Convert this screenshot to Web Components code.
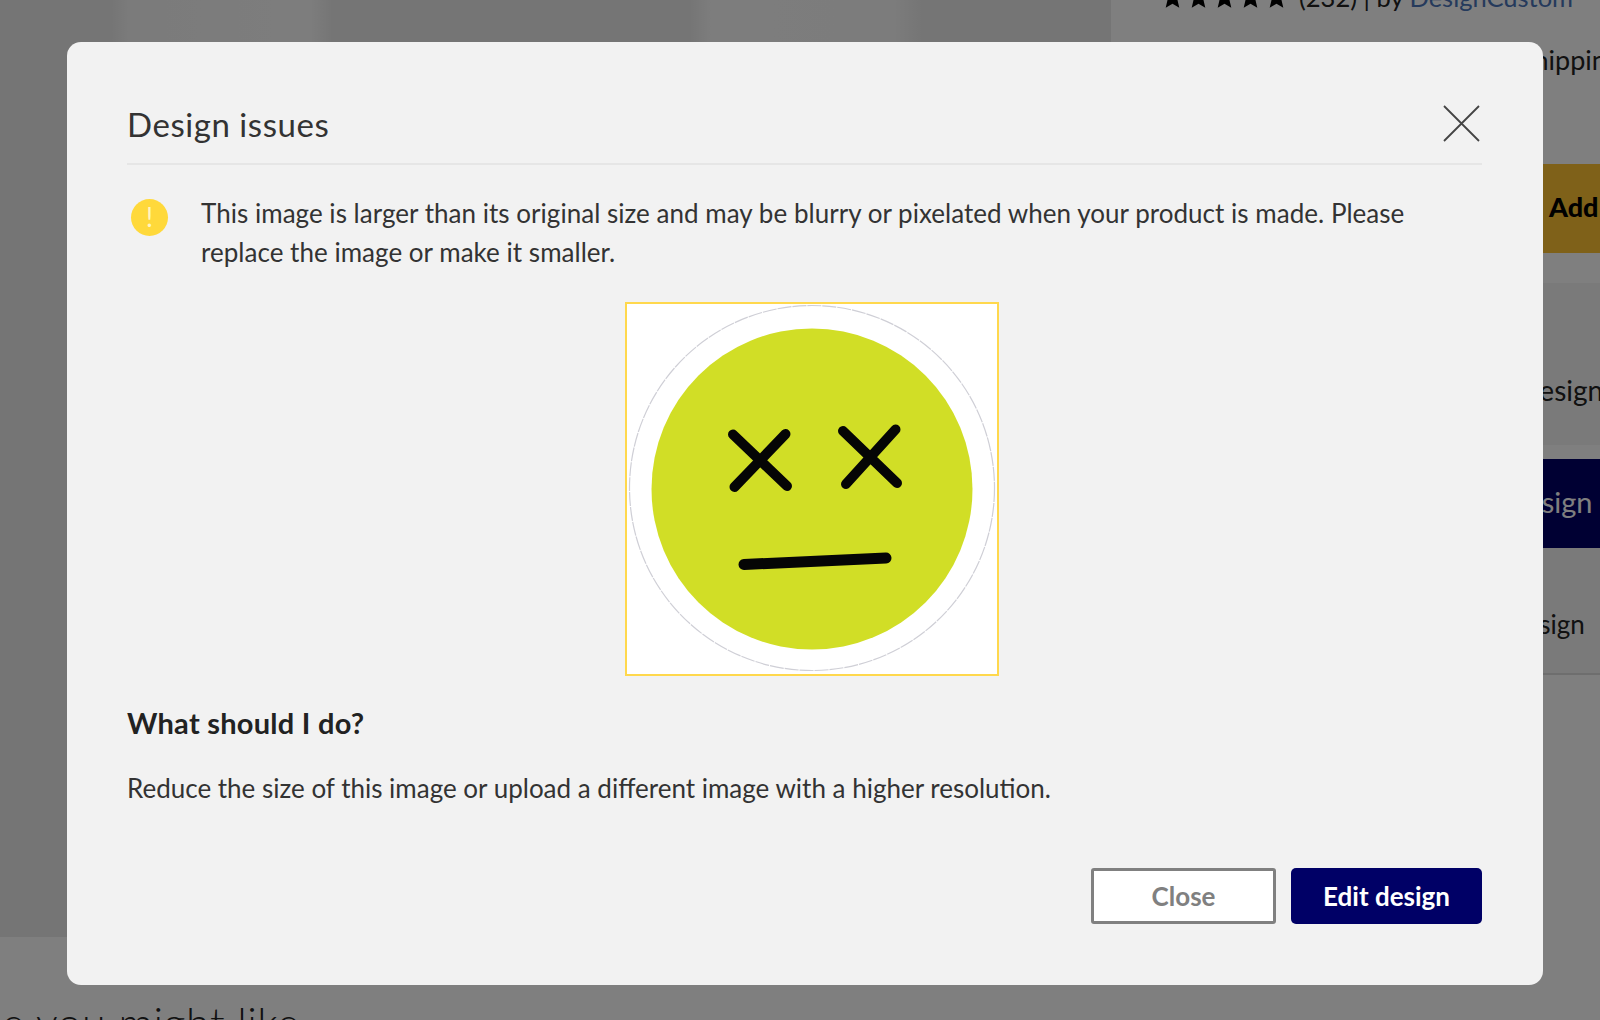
<!DOCTYPE html>
<html lang="en">
<head>
<meta charset="utf-8">
<title>Design issues</title>
<style>
  html, body { margin: 0; height: 100%; overflow: hidden; }
  body { font-family: "Lato", "Liberation Sans", sans-serif; color: #2b2b2b; background: #fff; }
</style>
</head>
<body>
<product-page></product-page>
<page-overlay>
  <issue-dialog heading="Design issues">
    <issue-notice>This image is larger than its original size and may be blurry or pixelated when your product is made. Please replace the image or make it smaller.</issue-notice>
    <preview-image></preview-image>
    <h3 slot="advice-title">What should I do?</h3>
    <p slot="advice">Reduce the size of this image or upload a different image with a higher resolution.</p>
    <dialog-button slot="actions" kind="secondary">Close</dialog-button>
    <dialog-button slot="actions" kind="primary">Edit design</dialog-button>
  </issue-dialog>
</page-overlay>

<script>
class ProductPage extends HTMLElement {
  constructor() {
    super();
    this.shadowDOM = this.attachShadow({ mode: "open" });
    this.render();
  }

  render() {
    this.shadowDOM.innerHTML = `<style>
    :host {
      display: block;
      width: 1600px;
      height: 1020px;
      overflow: hidden;
      background: #fff;
      color: #222;
    }
    .top {
      display: grid;
      grid-template-columns: 1111px 1fr;
      height: 937px;
    }
    .photo {
      background:
        linear-gradient(90deg, transparent 112px, #f6f6f6 128px, #fbfbfb 310px, transparent 332px, transparent 690px, #fbfbfb 712px, #f8f8f8 895px, transparent 922px),
        #ebebeb;
    }
    .buy {
      display: flex;
      flex-direction: column;
      overflow: hidden;
      white-space: nowrap;
    }
    .rating {
      display: flex;
      align-items: center;
      gap: 3px;
      height: 8px;
      padding-left: 50px;
      font-size: 25.5px;
    }
    .rating svg { width: 23px; height: 23px; flex: none; margin-top: -14px; }
    .rating span { margin: -14px 0 0 8px; }
    .rating a { color: #4a74b8; text-decoration: none; }
    .ship {
      margin-top: 36px;
      font-size: 27px;
      line-height: 32px;
      padding-left: 352px;
    }
    .add {
      margin-top: 88px;
      height: 89px;
      background: #ffc233;
      font-size: 27px;
      font-weight: 900;
      line-height: 85px;
      padding-left: 438px;
      color: #000;
    }
    .panel {
      margin-top: 30px;
      height: 162px;
      background: #f5f5f5;
      font-size: 28px;
      line-height: 32px;
      padding: 91px 0 0 350px;
      box-sizing: border-box;
    }
    .nav {
      margin-top: 14px;
      height: 89px;
      background: #000066;
      color: #fff;
      font-size: 29px;
      line-height: 85px;
      padding-left: 342px;
    }
    .plain {
      height: 127px;
      box-sizing: border-box;
      padding: 60px 0 0 340px;
      background: #f5f5f5;
      font-size: 26px;
      line-height: 32px;
      border-bottom: 2px solid #dcdcdc;
    }
    .more {
      margin-left: 2px;
      padding-top: 60px;
      font-size: 43px;
      font-weight: 300;
      letter-spacing: .5px;
      line-height: 52px;
      white-space: nowrap;
    }
    </style>
    <div class="top">
      <div class="photo"></div>
      <div class="buy">
        <div class="rating">
          ${'<svg viewBox="0 0 24 24"><path fill="#000" d="M12 1l3.2 7.6 8.2.7-6.2 5.4 1.9 8L12 18.4l-7.1 4.3 1.9-8L.6 9.300l8.200-.7z"/></svg>'.repeat(5)}
          <span>(232) | by <a>DesignCustom</a></span>
        </div>
        <div class="ship">Free shipping</div>
        <div class="add">Add to cart</div>
        <div class="panel">Your design</div>
        <div class="nav">Edit design</div>
        <div class="plain">Save design</div>
      </div>
    </div>
    <div class="more">e you might like</div>
    `;
  }
}

class PageOverlay extends HTMLElement {
  constructor() {
    super();
    this.shadowDOM = this.attachShadow({ mode: "open" });
    this.shadowDOM.innerHTML = `<style>
    :host {
      position: fixed;
      inset: 0;
      display: flex;
      box-sizing: border-box;
      padding: 42px 57px 35px 67px;
      background: rgba(0, 0, 0, .5);
    }
    </style><slot></slot>`;
  }
}

class IssueDialog extends HTMLElement {
  constructor() {
    super();
    this.shadowDOM = this.attachShadow({ mode: "open" });
    this.render();
  }

  render() {
    this.shadowDOM.innerHTML = `<style>
    :host {
      display: flex;
      flex-direction: column;
      flex: 1;
      box-sizing: border-box;
      padding: 0 61px 61px 60px;
      background: #f2f2f2;
      border-radius: 14px;
      color: #333;
    }
    header {
      display: flex;
      align-items: center;
      justify-content: space-between;
      height: 123px;
      box-sizing: border-box;
      padding-top: 41px;
      border-bottom: 2px solid #e6e6e6;
    }
    h2 {
      margin: 2px 0 0;
      font-size: 33px;
      font-weight: 400;
      letter-spacing: .55px;
    }
    svg { display: block; width: 37px; height: 37px; margin-right: 2px; }
    .advice { margin-top: 29px; }
    ::slotted(h3) {
      margin: 0;
      color: #222;
      font-size: 29px;
      font-weight: 700;
      letter-spacing: .25px;
      line-height: 36px;
    }
    ::slotted(p) {
      margin: 29px 0 0;
      font-size: 26px;
      line-height: 36px;
    }
    footer {
      margin-top: auto;
      display: flex;
      justify-content: flex-end;
      gap: 15px;
    }
    </style>
    <header>
      <h2>${this.getAttribute("heading")}</h2>
      <svg viewBox="0 0 37 37"><path d="M1 1l35 35M36 1L1 36" fill="none" stroke="#444" stroke-width="1.8"/></svg>
    </header>
    <slot></slot>
    <div class="advice">
      <slot name="advice-title"></slot>
      <slot name="advice"></slot>
    </div>
    <footer><slot name="actions"></slot></footer>
    `;
  }
}

class IssueNotice extends HTMLElement {
  constructor() {
    super();
    this.shadowDOM = this.attachShadow({ mode: "open" });
    this.shadowDOM.innerHTML = `<style>
    :host {
      display: flex;
      gap: 33px;
      padding: 33px 70px 0 4px;
      font-size: 26px;
      letter-spacing: .03px;
      line-height: 39px;
    }
    i {
      flex: none;
      width: 37px;
      height: 37px;
      margin-top: 1px;
      border-radius: 50%;
      background: #ffd93b;
      color: #fff5c4;
      font: 400 26px/37px "Lato", sans-serif;
      text-align: center;
    }
    div { margin-top: -4px; }
    </style>
    <i>!</i><div><slot></slot></div>`;
  }
}

class PreviewImage extends HTMLElement {
  constructor() {
    super();
    this.shadowDOM = this.attachShadow({ mode: "open" });
    this.shadowDOM.innerHTML = `<style>
    :host {
      display: block;
      align-self: center;
      width: 374px;
      height: 374px;
      margin: 30px 0 0 14px;
      box-sizing: border-box;
      border: 2px solid #ffd84d;
      background: #fff;
    }
    svg { display: block; width: 370px; height: 370px; }
    </style>
    <svg viewBox="1 1 370 370">
      <circle cx="186" cy="185" r="182.500" fill="none" stroke="#cfcfd6" stroke-width="1.200" stroke-dasharray="14 1"/>
      <circle cx="186" cy="186" r="160.500" fill="#d1de26"/>
      <g stroke="#050505" stroke-width="10" stroke-linecap="round" fill="none">
        <path d="M107 131.500L161 183M159.500 131L108.500 184"/>
        <path d="M217 128L271 180M269.500 126.500L220 181"/>
        <path d="M118 261.500L260 255" stroke-width="11"/>
      </g>
    </svg>`;
  }
}

class DialogButton extends HTMLElement {
  constructor() {
    super();
    this.shadowDOM = this.attachShadow({ mode: "open" });
    this.shadowDOM.innerHTML = `<style>
    :host {
      display: flex;
      align-items: center;
      justify-content: center;
      box-sizing: border-box;
      height: 56px;
      font-size: 26px;
      font-weight: 700;
      cursor: pointer;
    }
    :host([kind="secondary"]) {
      width: 185px;
      background: #fff;
      border: 3px solid #808080;
      border-radius: 3px;
      color: #808080;
    }
    :host([kind="primary"]) {
      width: 191px;
      background: #000066;
      border-radius: 5px;
      color: #fff;
    }
    </style><slot></slot>`;
  }
}

customElements.define("product-page", ProductPage);
customElements.define("page-overlay", PageOverlay);
customElements.define("issue-dialog", IssueDialog);
customElements.define("issue-notice", IssueNotice);
customElements.define("preview-image", PreviewImage);
customElements.define("dialog-button", DialogButton);
</script>
</body>
</html>
